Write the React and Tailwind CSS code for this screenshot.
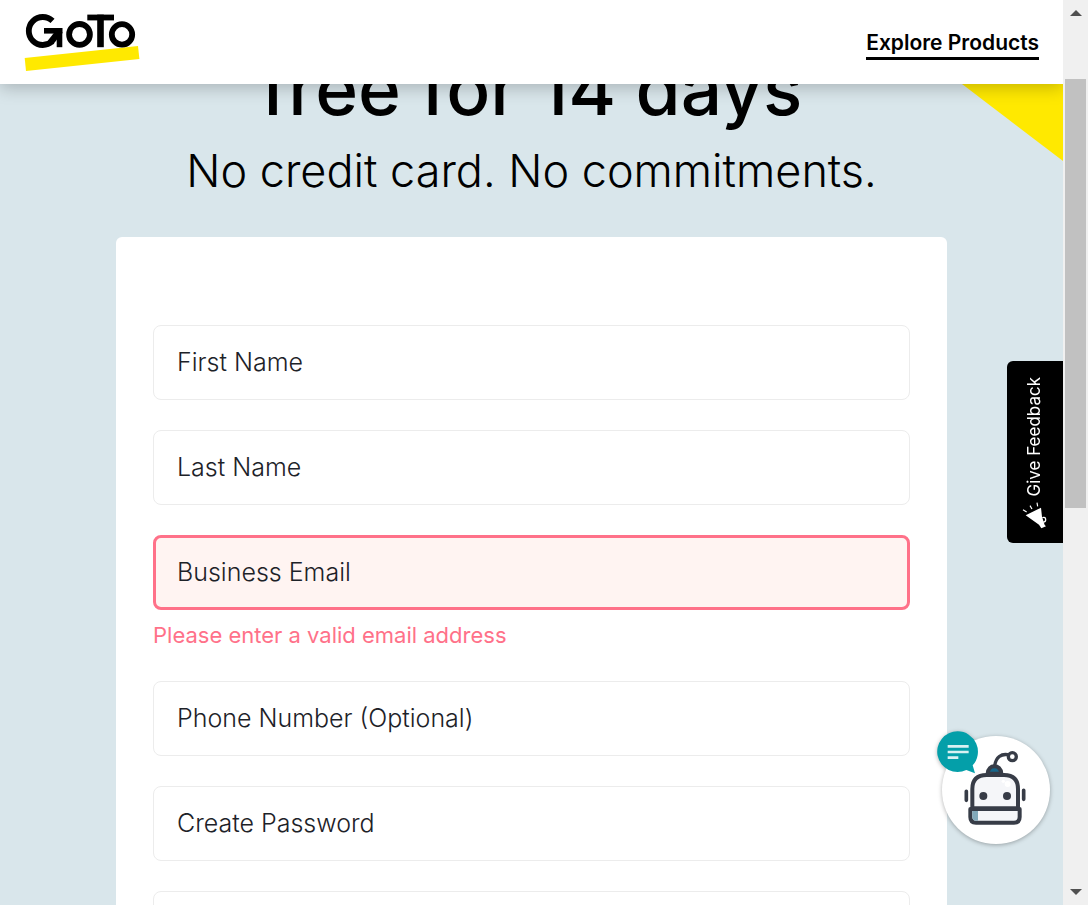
import React from "react";

function GoToLogo() {
  return (
    <svg width="116" height="60" viewBox="24 12 116 60" role="img" aria-label="GoTo">
      <polygon points="24.7,58 138,46 139.4,59 26,71" fill="#ffe900" />
      <g fill="none" stroke="#000" strokeWidth="5.8">
        <circle cx="42.8" cy="31" r="14" pathLength="360" strokeDasharray="267 93" strokeDashoffset="-47" />
        <circle cx="79.5" cy="34.4" r="10.4" />
        <circle cx="122" cy="34.4" r="10.2" />
        <line x1="44" y1="30.8" x2="62.3" y2="30.8" strokeWidth="5.6" />
        <line x1="59.5" y1="28" x2="59.5" y2="47.2" strokeWidth="5.6" />
        <line x1="60" y1="30.5" x2="50.5" y2="42.5" strokeWidth="6.6" />
      </g>
      <rect x="87.3" y="14.6" width="26.7" height="5.8" />
      <rect x="97.2" y="14.6" width="6.6" height="32.6" />
    </svg>
  );
}

function Megaphone() {
  return (
    <svg width="25" height="27" viewBox="100 456 75 81" aria-hidden="true">
      <path d="M111 496 L157 473 L160 500 L168 525 L172 529 L158 535 L151 524 Z" fill="#fff" />
      <path d="M161 503 Q171 500 171 509 Q171 516 164 516" fill="none" stroke="#fff" strokeWidth="4" />
      <path d="M103 479 L114 486 M124 467 L130 477 M145 458 L147 469" stroke="#fff" strokeWidth="3.5" />
    </svg>
  );
}

function ChatBot() {
  return (
    <svg className="drop-shadow-[0_1px_2px_rgba(0,0,0,0.3)]" width="118" height="120" viewBox="48 45 354 360" aria-hidden="true">
      <circle cx="228" cy="225" r="162" fill="#fff" />
      <g stroke="#373c47" strokeWidth="12" strokeLinecap="round" strokeLinejoin="round">
        <path d="M224 152 C228 126 244 116 263 119" fill="none" strokeWidth="10" />
        <circle cx="277" cy="125" r="12" fill="#fff" strokeWidth="10" />
        <path d="M203 176 C204 146 242 146 244 176 Z" fill="#17668a" />
        <path d="M157 280 V222 Q157 180 200 180 H252 Q294 180 294 222 V280 Z" fill="#f5f6f9" />
        <path d="M151 282 H299 V306 Q299 323 282 323 H168 Q151 323 151 306 Z" fill="#f5f6f9" />
        <path d="M139 229 V256 M311 226 V253" strokeWidth="11" />
      </g>
      <path d="M157 288 H174 V317 H168 Q157 317 157 306 Z" fill="#82a9ba" />
      <circle cx="190" cy="243" r="12" fill="#373c47" />
      <circle cx="261" cy="243" r="12" fill="#373c47" />
      <circle cx="263" cy="207" r="9" fill="#fff" />
      <circle cx="250" cy="199" r="5" fill="#fff" />
      <path d="M113 49 A61 61 0 1 0 139 165 L165 175 L158 151 A61 61 0 0 0 113 49 Z" fill="#049fa9" />
      <path d="M83 94 H146 M83 111 H146 M83 128 H115" stroke="#d9f1f2" strokeWidth="8" />
    </svg>
  );
}

function Field({ id, label, type = "text", error }) {
  return (
    <div>
      <div className="grid">
        <input
          id={id}
          type={type}
          aria-invalid={Boolean(error)}
          aria-describedby={error ? id + "-error" : undefined}
          className={
            "col-start-1 row-start-1 h-[75px] w-full rounded-lg px-6 text-[25px] outline-none " +
            (error ? "border-3 border-[#ff7189] bg-[#fff4f2]" : "border border-[#ececec] bg-white")
          }
        />
        <label
          htmlFor={id}
          className="pointer-events-none col-start-1 row-start-1 self-center px-6 pb-0.5 text-[25px] leading-8 font-[350] text-[#1d2228]"
        >
          {label}
        </label>
      </div>
      {error && (
        <p id={id + "-error"} className="mt-[9px] text-[22px] leading-8 font-normal text-[#ff7189]">
          {error}
        </p>
      )}
    </div>
  );
}

function ScrollTrack() {
  return (
    <div className="flex w-[25px] shrink-0 flex-col items-center bg-[#f0f0f0] py-2.5" aria-hidden="true">
      <svg width="12" height="6" viewBox="0 0 12 6">
        <path d="M0 6 L6 0 L12 6 Z" fill="#505050" />
      </svg>
      <div className="mt-[63px] h-[429px] w-[21px] bg-[#c1c1c1]" />
      <svg className="mt-auto" width="12" height="6" viewBox="0 0 12 6">
        <path d="M0 0 L6 6 L12 0 Z" fill="#505050" />
      </svg>
    </div>
  );
}

export default function App() {
  return (
    <div className="flex h-screen overflow-hidden bg-[#d9e6eb] font-['Inter',sans-serif] text-black">
      <div className="relative min-w-0 flex-1 overflow-hidden">
        <header className="relative z-10 flex h-[84px] items-center justify-between bg-white px-6 shadow-[0_4px_16px_rgba(0,0,0,0.22)]">
          <a href="#home">
            <GoToLogo />
          </a>
          <a href="#products" className="mt-[5px] border-b-3 border-black text-[21px] leading-7 font-semibold">
            Explore Products
          </a>
        </header>

        <svg className="absolute top-[84px] right-0" width="101" height="77" viewBox="0 0 101 77" aria-hidden="true">
          <path d="M0 0 H101 V77 Z" fill="#ffe900" />
        </svg>

        <main className="relative -mt-[35px]">
          <h1 className="text-center text-[73px] leading-[80px] font-medium">free for 14 days</h1>
          <p className="mt-3 text-center text-[45px] leading-[60px] font-light">No credit card. No commitments.</p>
          <form className="mx-[116px] mt-9 flex flex-col gap-[30px] rounded-md bg-white px-[37px] pt-[88px] pb-10">
            <Field id="first" label="First Name" />
            <Field id="last" label="Last Name" />
            <Field id="email" label="Business Email" type="email" error="Please enter a valid email address" />
            <Field id="phone" label="Phone Number (Optional)" type="tel" />
            <Field id="password" label="Create Password" type="password" />
            <Field id="job" label="" />
          </form>
        </main>

        <button
          type="button"
          className="absolute top-[361px] right-0 flex h-[182px] w-14 flex-col items-center justify-end gap-1.5 rounded-l-md bg-black pr-0.5 pb-3.5 text-white"
        >
          <span className="rotate-180 text-[17px] leading-6 [writing-mode:vertical-rl]">Give Feedback</span>
          <Megaphone />
        </button>

        <button type="button" aria-label="Chat" className="absolute right-[9px] bottom-[55px]">
          <ChatBot />
        </button>
      </div>
      <ScrollTrack />
    </div>
  );
}
